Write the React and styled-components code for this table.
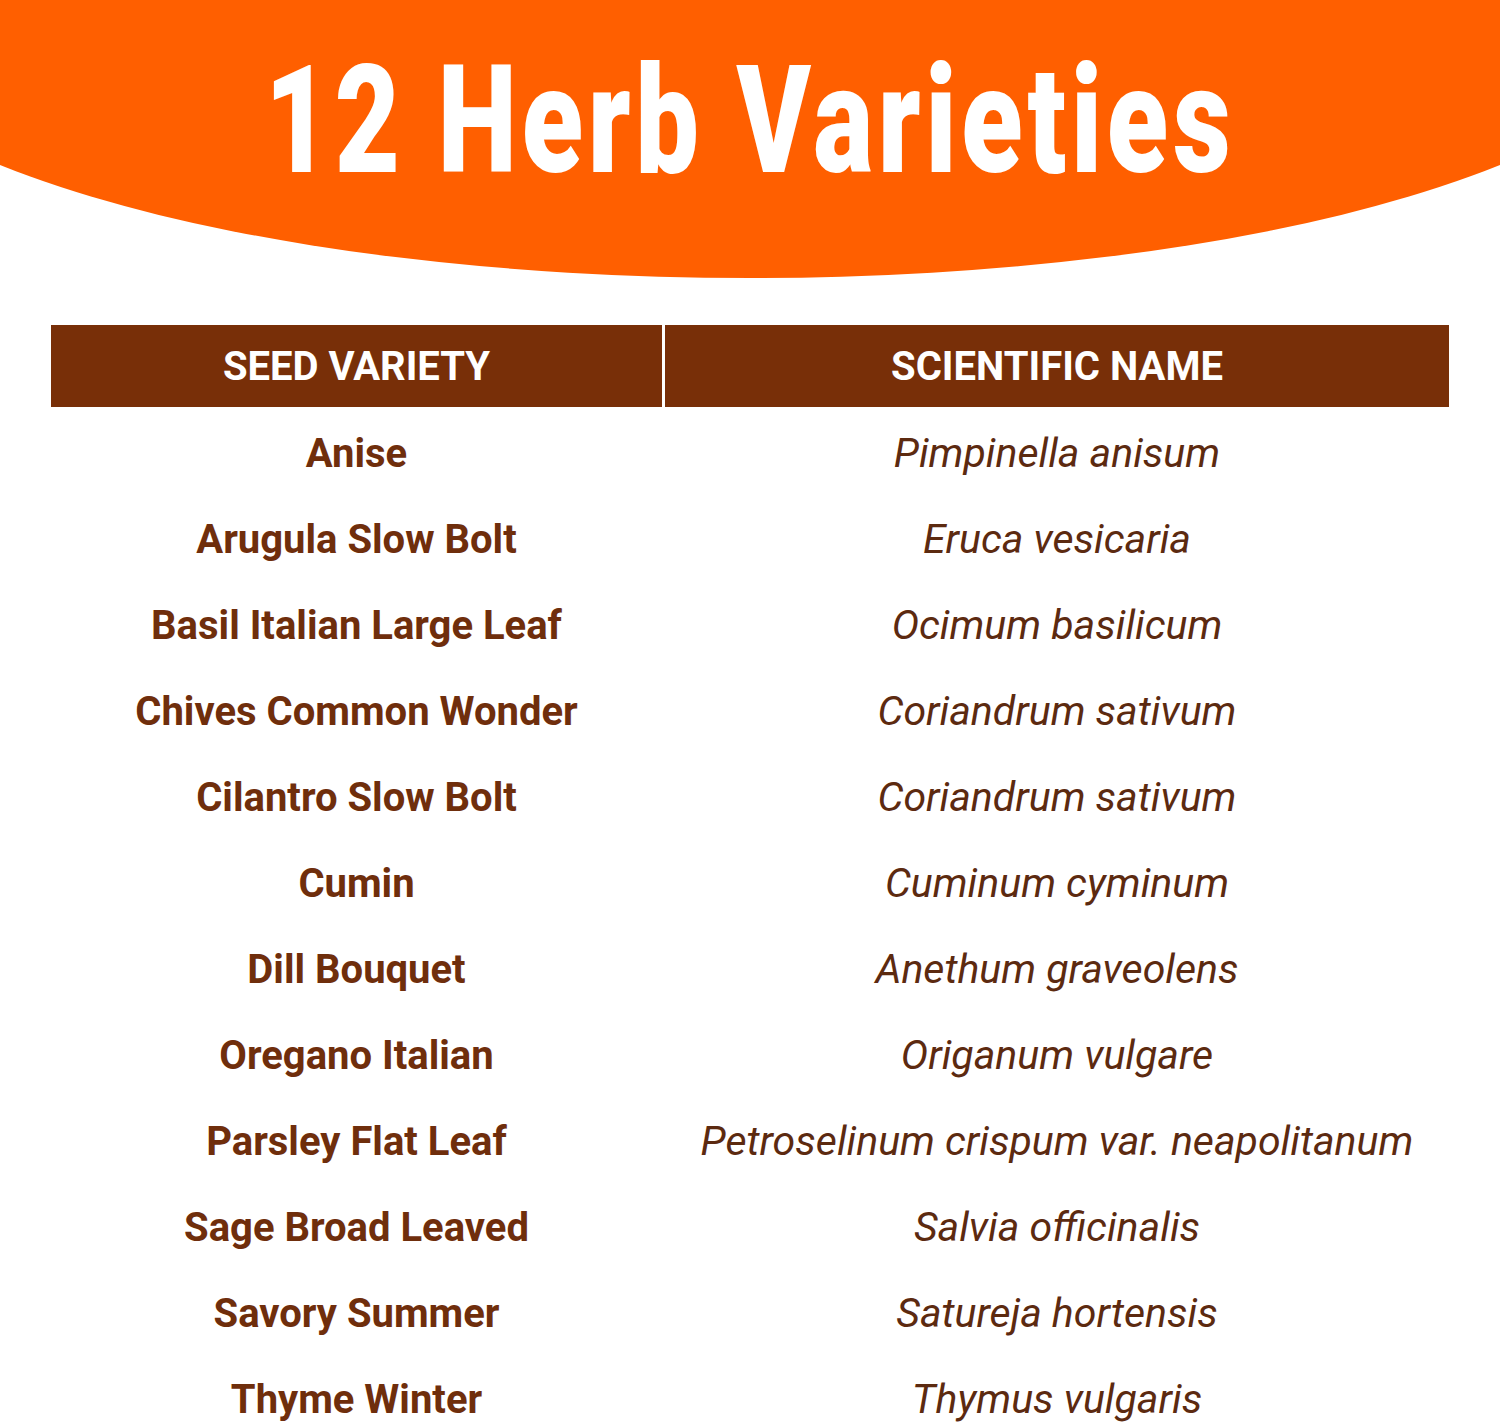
import React from 'react';
import styled, { createGlobalStyle } from 'styled-components';

const GlobalStyle = createGlobalStyle`
  html, body {
    margin: 0;
    padding: 0;
    background: #ffffff;
    font-family: Roboto, "Liberation Sans", sans-serif;
  }
`;

const Page = styled.div`
  width: 1500px;
  height: 1425px;
  overflow: hidden;
  background: #ffffff;
`;

const Banner = styled.header`
  height: 280px;
  background: #ff5f00;
  clip-path: ellipse(932px 278px at 50% 0);
  display: flex;
  justify-content: center;
`;

const Title = styled.h1`
  margin: 0;
  padding-top: 46px;
  font-family: Roboto, "Liberation Sans", sans-serif;
  font-weight: 900;
  font-size: 150px;
  line-height: 1;
  letter-spacing: 6.5px;
  color: #ffffff;
  white-space: nowrap;
  transform: scaleX(0.75);
  transform-origin: center top;
`;

const Table = styled.div`
  margin: 45px 51px 0;
  display: grid;
  grid-template-columns: 611px 784px;
  column-gap: 3px;
`;

const HeadCell = styled.div`
  height: 82px;
  background: #782f08;
  color: #ffffff;
  display: flex;
  align-items: center;
  justify-content: center;
  font-weight: 700;
  font-size: 40px;
`;

const Body = styled.div`
  grid-column: 1 / -1;
  padding-top: 3px;
  display: grid;
  grid-template-columns: 611px 784px;
  column-gap: 3px;
  grid-auto-rows: 86px;
`;

const Cell = styled.div`
  display: flex;
  align-items: center;
  justify-content: center;
  white-space: nowrap;
  font-size: ${(p) => (p.$italic ? '41px' : '40px')};
  font-weight: ${(p) => (p.$italic ? 400 : 700)};
  font-style: ${(p) => (p.$italic ? 'italic' : 'normal')};
  color: ${(p) => (p.$italic ? '#5c2a10' : '#6f2e0c')};
`;

const herbs = [
  ['Anise', 'Pimpinella anisum'],
  ['Arugula Slow Bolt', 'Eruca vesicaria'],
  ['Basil Italian Large Leaf', 'Ocimum basilicum'],
  ['Chives Common Wonder', 'Coriandrum sativum'],
  ['Cilantro Slow Bolt', 'Coriandrum sativum'],
  ['Cumin', 'Cuminum cyminum'],
  ['Dill Bouquet', 'Anethum graveolens'],
  ['Oregano Italian', 'Origanum vulgare'],
  ['Parsley Flat Leaf', 'Petroselinum crispum var. neapolitanum'],
  ['Sage Broad Leaved', 'Salvia officinalis'],
  ['Savory Summer', 'Satureja hortensis'],
  ['Thyme Winter', 'Thymus vulgaris'],
];

const App = () => (
  <Page>
    <GlobalStyle />
    <Banner>
      <Title>12 Herb Varieties</Title>
    </Banner>
    <Table>
      <HeadCell>SEED VARIETY</HeadCell>
      <HeadCell>SCIENTIFIC NAME</HeadCell>
      <Body>
        {herbs.map(([name, sci]) => (
          <React.Fragment key={name}>
            <Cell>{name}</Cell>
            <Cell $italic>{sci}</Cell>
          </React.Fragment>
        ))}
      </Body>
    </Table>
  </Page>
);

export default App;
